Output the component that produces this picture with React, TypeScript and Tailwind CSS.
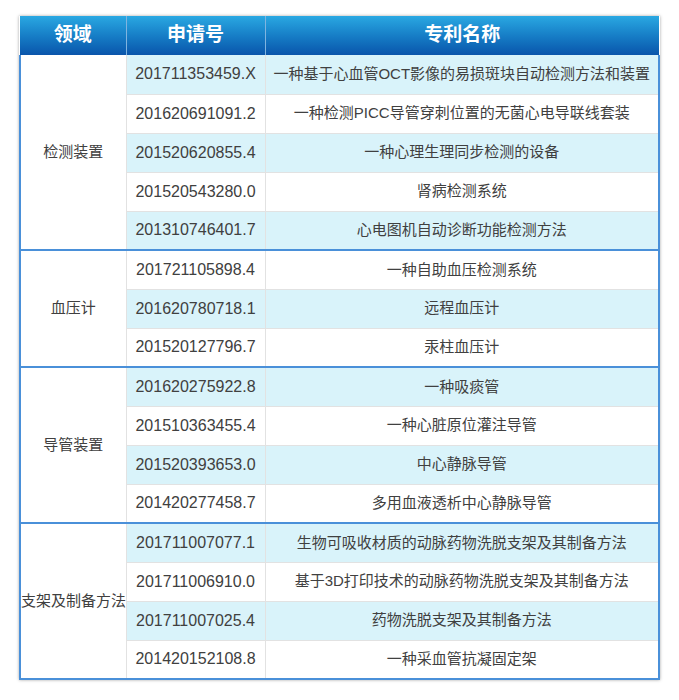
import React from "react";

const GROUPS = [
  {
    field: "检测装置",
    rows: [
      ["201711353459.X", "一种基于心血管OCT影像的易损斑块自动检测方法和装置"],
      ["201620691091.2", "一种检测PICC导管穿刺位置的无菌心电导联线套装"],
      ["201520620855.4", "一种心理生理同步检测的设备"],
      ["201520543280.0", "肾病检测系统"],
      ["201310746401.7", "心电图机自动诊断功能检测方法"],
    ],
  },
  {
    field: "血压计",
    rows: [
      ["201721105898.4", "一种自助血压检测系统"],
      ["201620780718.1", "远程血压计"],
      ["201520127796.7", "汞柱血压计"],
    ],
  },
  {
    field: "导管装置",
    rows: [
      ["201620275922.8", "一种吸痰管"],
      ["201510363455.4", "一种心脏原位灌注导管"],
      ["201520393653.0", "中心静脉导管"],
      ["201420277458.7", "多用血液透析中心静脉导管"],
    ],
  },
  {
    field: "支架及制备方法",
    rows: [
      ["201711007077.1", "生物可吸收材质的动脉药物洗脱支架及其制备方法"],
      ["201711006910.0", "基于3D打印技术的动脉药物洗脱支架及其制备方法"],
      ["201711007025.4", "药物洗脱支架及其制备方法"],
      ["201420152108.8", "一种采血管抗凝固定架"],
    ],
  },
];

export default function App() {
  let idx = 0;
  return (
    <div className="w-[679px] h-[700px] bg-white pt-[16px] pl-[19px] font-['Liberation_Sans','Noto_Sans_CJK_SC',sans-serif]">
      <table className="w-[641px] border-collapse table-fixed text-[15px] text-[#404040] shadow-[0_0_3px_rgba(0,0,0,0.35)]">
        <colgroup>
          <col className="w-[106px]" />
          <col className="w-[139px]" />
          <col />
        </colgroup>
        <thead>
          <tr className="h-[39px] bg-gradient-to-b from-[#2aa8e2] to-[#0b55ab] text-white text-[19px] font-bold">
            <th className="border-r border-[#7fb4e0]">领域</th>
            <th className="border-r border-[#7fb4e0]">申请号</th>
            <th>专利名称</th>
          </tr>
        </thead>
        <tbody>
          {GROUPS.map((g) =>
            g.rows.map((r, i) => {
              const blue = idx++ % 2 === 0;
              const last = i === g.rows.length - 1;
              return (
                <tr
                  key={r[0]}
                  className={`h-[39px] ${last ? "border-b-2 border-[#4a90d9]" : ""}`}
                >
                  {i === 0 && (
                    <td
                      rowSpan={g.rows.length}
                      className="bg-white text-center border-l-2 border-r border-l-[#4a90d9] border-r-[#e2e2e2] px-0 whitespace-nowrap"
                    >
                      {g.field}
                    </td>
                  )}
                  <td
                    className={`text-center text-[16px] border-r border-[#e2e2e2] ${last ? "" : "border-b"} ${
                      blue ? "bg-[#d9f3fa]" : "bg-white"
                    }`}
                  >
                    {r[0]}
                  </td>
                  <td
                    className={`text-center border-r-2 border-r-[#4a90d9] ${last ? "" : "border-b border-b-[#e2e2e2]"} ${
                      blue ? "bg-[#d9f3fa]" : "bg-white"
                    }`}
                  >
                    {r[1]}
                  </td>
                </tr>
              );
            })
          )}
        </tbody>
      </table>
    </div>
  );
}
